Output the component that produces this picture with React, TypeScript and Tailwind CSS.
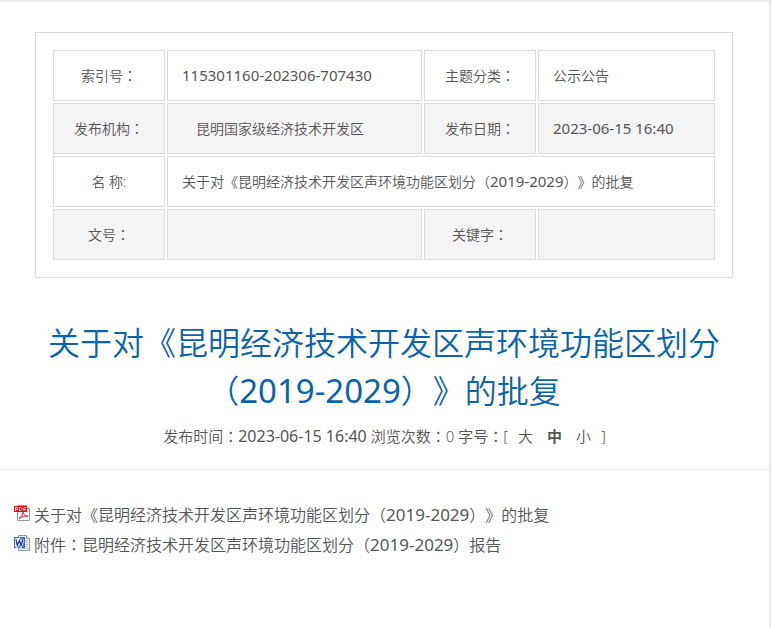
import { Fragment, useState } from "react";

const LATIN_RUN = /([0-9][0-9:\- ]*[0-9]|[：（）])/;

// Sets digit runs one step larger and centres full-width colons and brackets.
function Mixed({ text, digits }: { text: string; digits: string }) {
  return (
    <>
      {text.split(LATIN_RUN).map((run, i) => {
        if (i % 2 === 0) return <Fragment key={i}>{run}</Fragment>;
        if (/[0-9]/.test(run)) {
          return (
            <span key={i} className={`leading-none font-normal ${digits}`}>
              {run}
            </span>
          );
        }
        return (
          <span key={i} className="font-['Noto_Sans_CJK_TC',sans-serif] leading-none">
            {run}
          </span>
        );
      })}
    </>
  );
}

const cell = "h-[51px] border border-[#dcdcdc] p-0 leading-6 font-[350]";

function Label({ text }: { text: string }) {
  return (
    <th scope="row" className={`${cell} text-center`}>
      <Mixed text={text} digits="text-[15px]" />
    </th>
  );
}

function Value({ text, span, indent }: { text: string; span?: number; indent?: boolean }) {
  return (
    <td colSpan={span} className={`${cell} text-left ${indent ? "pl-7" : "pl-3.5"}`}>
      <Mixed text={text} digits="text-[15px]" />
    </td>
  );
}

function PdfIcon() {
  return (
    <svg width="16" height="16" viewBox="0 0 16 16" aria-hidden="true" className="mt-[5px] shrink-0">
      <path d="M3.5 0.5h9l3 3v12h-12z" fill="#f1f3f8" stroke="#8f97a9" />
      <path d="M12.5 0.5v3h3" fill="#fff" stroke="#8f97a9" />
      <path
        d="M5 13.500c2-.8 3.700-3.500 4-6.500c.5 2.500 2 4 5 4.300c-3.500-.3-6 .2-9 2.200"
        fill="none"
        stroke="#e5262b"
      />
      <rect x="0" y="1" width="13" height="6" fill="#f80808" />
      <path
        d="M1.500 6V2.500h2v2h-2M5.500 2v3.500h1.500l1-1v-1l-1-1h-1.500M10 6V2.500h2.500M10 4.500h2"
        fill="none"
        stroke="#fff"
        strokeWidth="0.9"
      />
    </svg>
  );
}

function WordIcon() {
  return (
    <svg width="16" height="16" viewBox="0 0 16 16" aria-hidden="true" className="mt-[5px] shrink-0">
      <path d="M4.500 0.500h8l3 3v12h-11z" fill="#eef3fa" stroke="#8796b4" />
      <path d="M12.500 0.500v3h3" fill="#fff" stroke="#8796b4" />
      <path d="M11 5.500h3M11 7.500h3M11 9.500h3M11 11.500h3M6 13.500h8" stroke="#b4c1d8" />
      <rect x="0.500" y="2.500" width="10" height="10" fill="#dbe6f7" stroke="#3c68b4" />
      <path d="M6 3h4v9H4z" fill="#4f79c2" />
      <path d="M2 4.500l1.300 6L5.500 5.500L7 10.500L9 4.500" fill="none" stroke="#fff" strokeWidth="2.600" />
      <path d="M2 4.500l1.300 6L5.500 5.500L7 10.500L9 4.500" fill="none" stroke="#1f3f8c" strokeWidth="1.300" />
    </svg>
  );
}

const sizes = ["大", "中", "小"];

export default function App() {
  const [size, setSize] = useState("中");

  return (
    <div className="min-h-screen border-t-2 border-r-2 border-t-[#ececec] border-r-[#e8e8e8] bg-white font-['Noto_Sans','Noto_Sans_CJK_SC',sans-serif] text-[#555] [text-spacing-trim:space-all]">
      <div className="mt-[30px] mr-9 ml-[35px] border border-[#dcdcdc] p-[15px]">
        <table className="w-full table-fixed border-separate border-spacing-0.5 text-sm">
          <colgroup>
            <col className="w-28" />
            <col className="w-[255px]" />
            <col className="w-28" />
            <col />
          </colgroup>
          <tbody>
            <tr>
              <Label text="索引号：" />
              <Value text="115301160-202306-707430" />
              <Label text="主题分类：" />
              <Value text="公示公告" />
            </tr>
            <tr className="bg-[#f4f4f4]">
              <Label text="发布机构：" />
              <Value text="昆明国家级经济技术开发区" indent />
              <Label text="发布日期：" />
              <Value text="2023-06-15 16:40" />
            </tr>
            <tr>
              <Label text="名 称:" />
              <Value text="关于对《昆明经济技术开发区声环境功能区划分（2019-2029）》的批复" span={3} />
            </tr>
            <tr className="bg-[#f4f4f4]">
              <Label text="文号：" />
              <Value text="" />
              <Label text="关键字：" />
              <Value text="" />
            </tr>
          </tbody>
        </table>
      </div>

      <h1 className="mt-[41px] mr-9 ml-[35px] text-center text-[32px] leading-[48px] font-[350] text-[#0b64ab]">
        <Mixed text="关于对《昆明经济技术开发区声环境功能区划分（2019-2029）》的批复" digits="text-[33px]" />
      </h1>

      <div className="flex justify-center border-b border-[#eee] pt-[7px] pb-[19px] text-[15px] leading-7 font-[350] whitespace-pre">
        <span>
          <Mixed text="发布时间：2023-06-15 16:40 浏览次数：0 字号：" digits="text-base" />[
        </span>
        <span className="flex gap-3.5 px-2.5">
          {sizes.map((s) => (
            <button
              key={s}
              type="button"
              onClick={() => setSize(s)}
              className={s === size ? "cursor-pointer font-bold" : "cursor-pointer"}
            >
              {s}
            </button>
          ))}
        </span>
        <span>]</span>
      </div>

      <ul className="mt-[30px] px-3.5 text-base leading-[30px] font-[350]">
        <li>
          <a href="#pdf" className="flex items-start gap-1">
            <PdfIcon />
            <span>
              <Mixed text="关于对《昆明经济技术开发区声环境功能区划分（2019-2029）》的批复" digits="text-[17px]" />
            </span>
          </a>
        </li>
        <li>
          <a href="#doc" className="flex items-start gap-1">
            <WordIcon />
            <span>
              <Mixed text="附件：昆明经济技术开发区声环境功能区划分（2019-2029）报告" digits="text-[17px]" />
            </span>
          </a>
        </li>
      </ul>
    </div>
  );
}
